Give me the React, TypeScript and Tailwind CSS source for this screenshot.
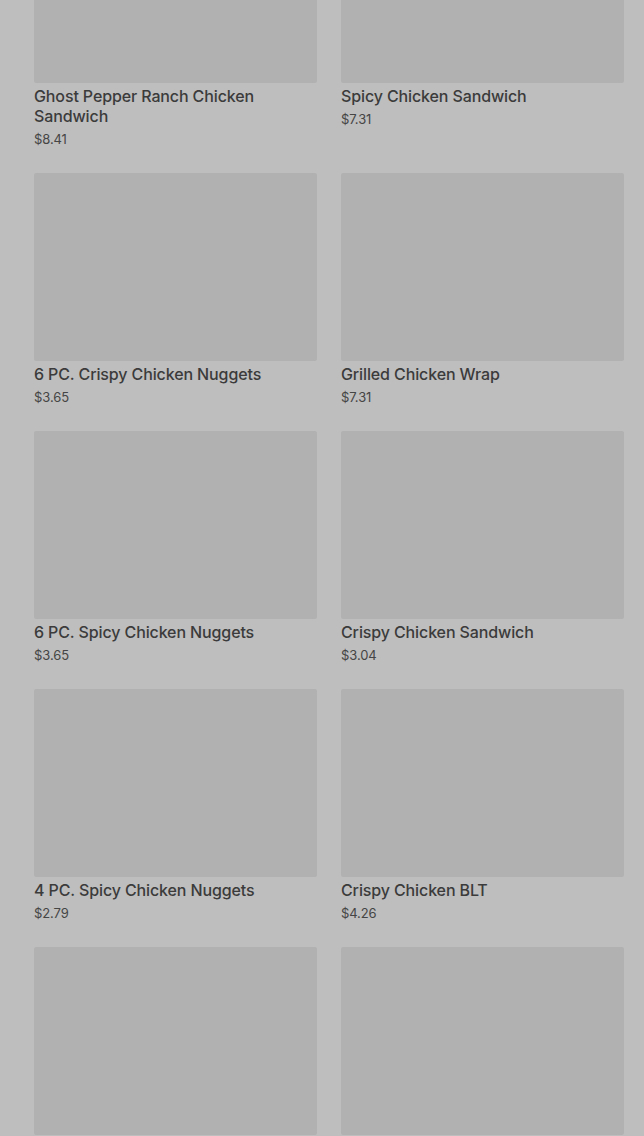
import React from "react";

interface MenuItem {
  name: string;
  price: string;
}

const items: MenuItem[] = [
  { name: "Ghost Pepper Ranch Chicken Sandwich", price: "$8.41" },
  { name: "Spicy Chicken Sandwich", price: "$7.31" },
  { name: "6 PC. Crispy Chicken Nuggets", price: "$3.65" },
  { name: "Grilled Chicken Wrap", price: "$7.31" },
  { name: "6 PC. Spicy Chicken Nuggets", price: "$3.65" },
  { name: "Crispy Chicken Sandwich", price: "$3.04" },
  { name: "4 PC. Spicy Chicken Nuggets", price: "$2.79" },
  { name: "Crispy Chicken BLT", price: "$4.26" },
  { name: "Chicken Club Sandwich", price: "$6.49" },
  { name: "Spicy Chicken Wrap", price: "$5.19" },
];

function MenuCard({ item }: { item: MenuItem }) {
  return (
    <div className="flex flex-col">
      <div className="h-[188px] w-full rounded-[2px] bg-[#b1b1b1]" />
      <h2 className="mt-[3px] text-[16px] leading-5 font-medium tracking-[-0.12px] text-[#3b3b3b]">
        {item.name}
      </h2>
      <p className="mt-[3px] text-[13px] leading-5 tracking-[-0.1px] text-[#454545]">
        {item.price}
      </p>
    </div>
  );
}

export default function App() {
  return (
    <div
      className="h-[1136px] w-full overflow-hidden bg-[#bebebe]"
      style={{ fontFamily: "Inter, 'Noto Sans', sans-serif" }}
    >
      <div className="-mt-[105px] grid grid-cols-2 gap-x-6 gap-y-6 pl-[34px] pr-[20px]">
        {items.map((item) => (
          <MenuCard key={item.name} item={item} />
        ))}
      </div>
    </div>
  );
}
